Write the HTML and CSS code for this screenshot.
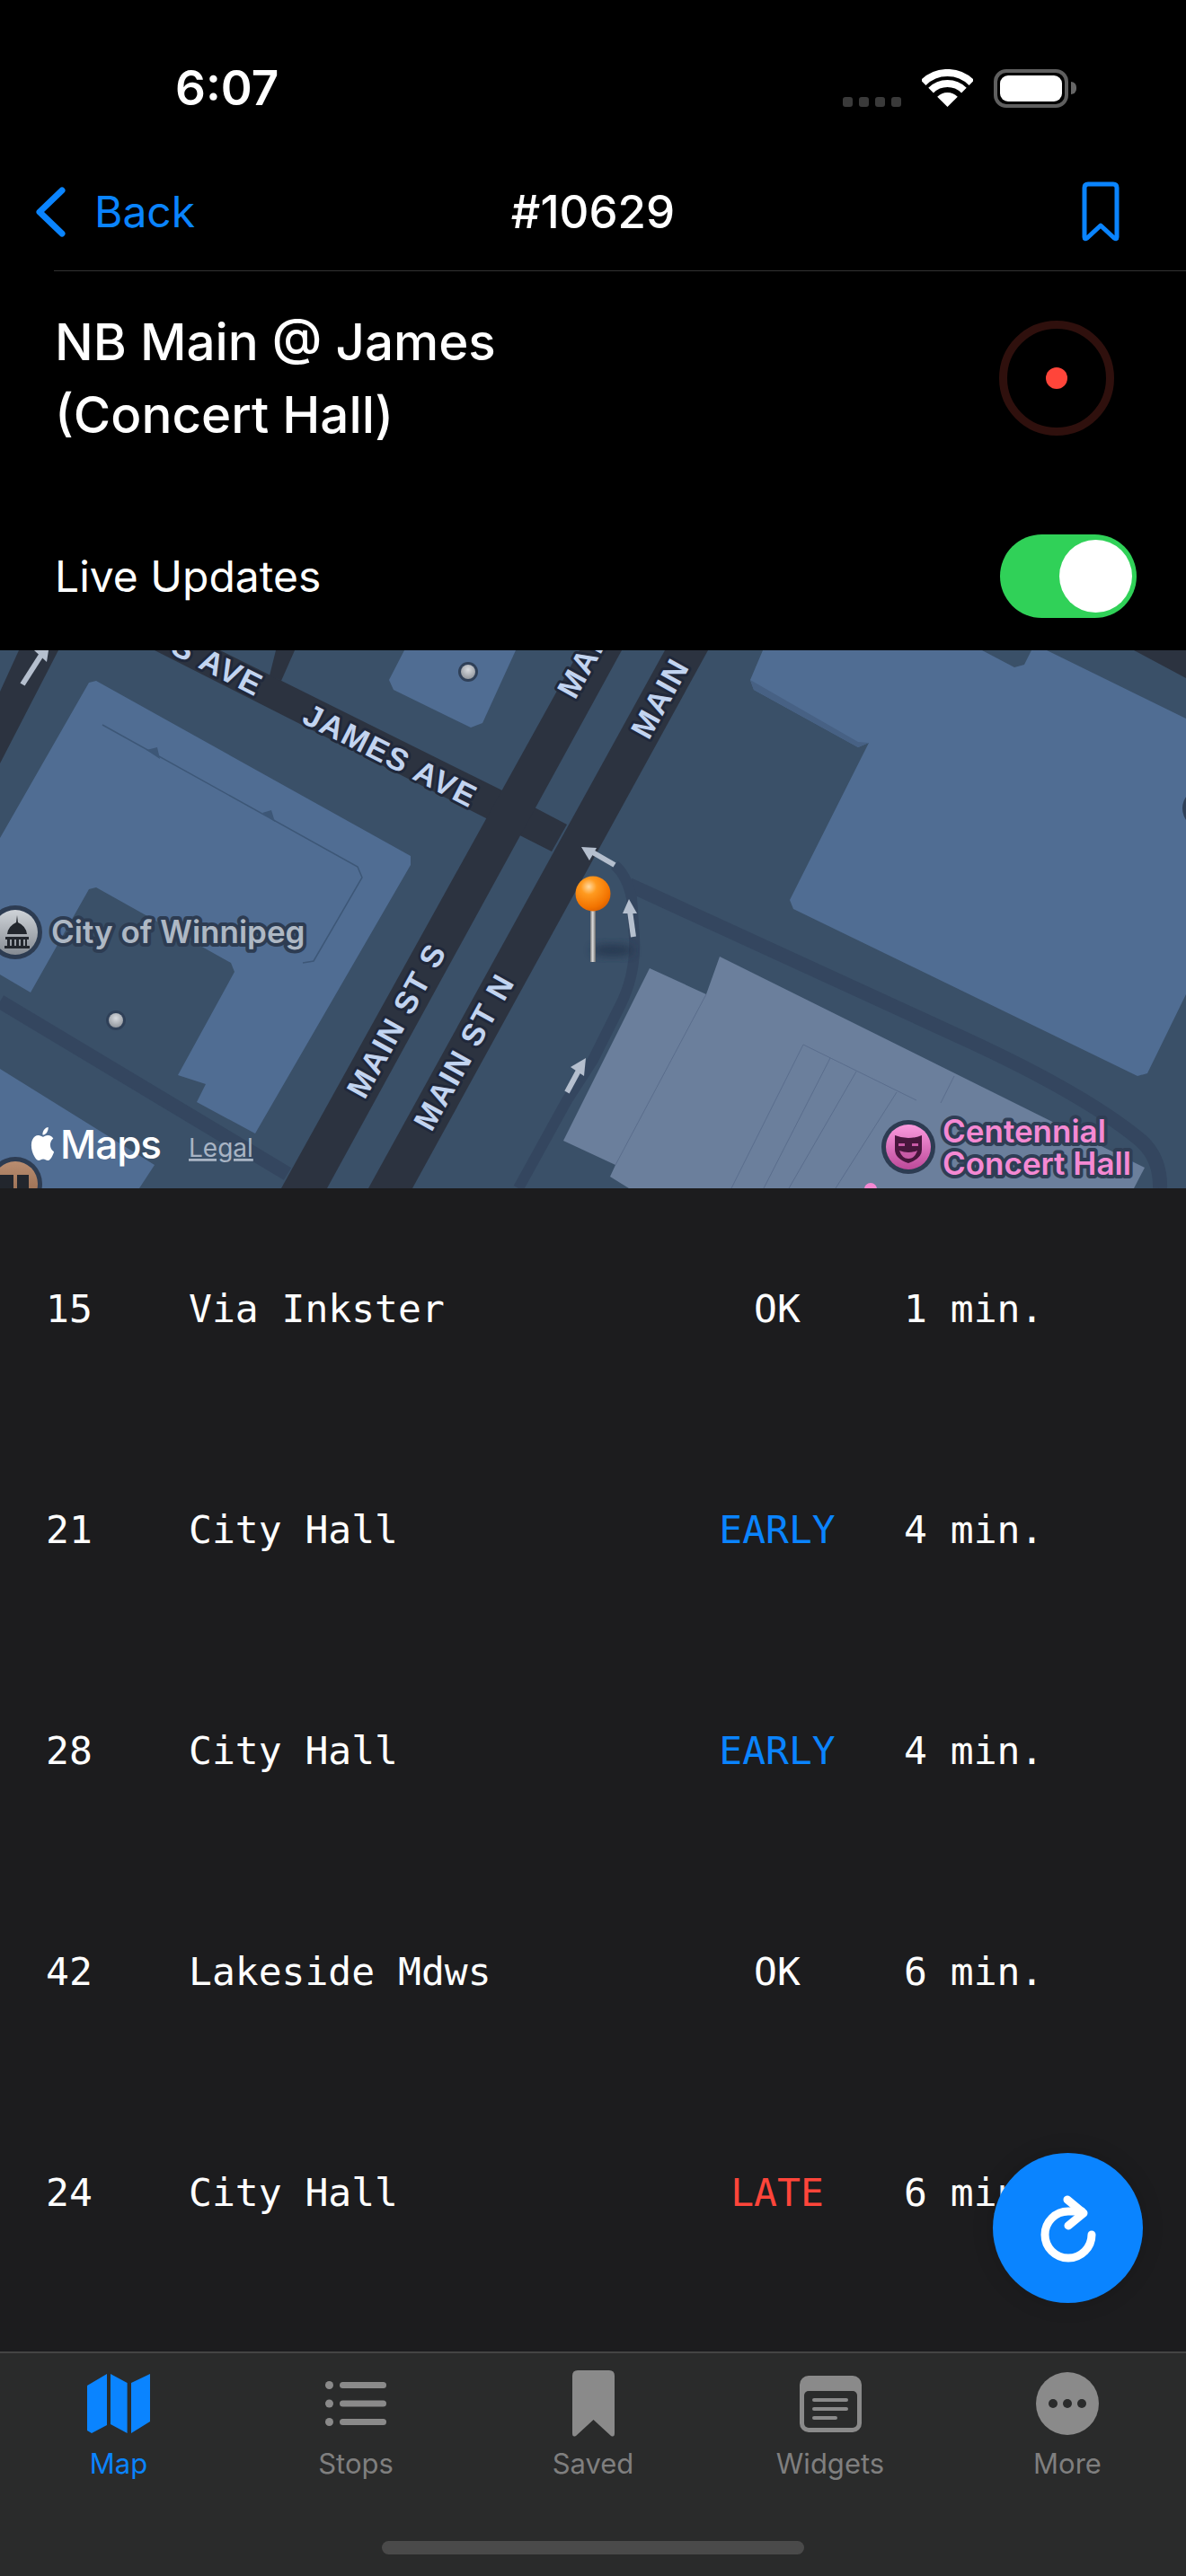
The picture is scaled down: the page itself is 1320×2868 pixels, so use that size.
FILE: index.html
```html
<!DOCTYPE html>
<html lang="en">
<head>
<meta charset="utf-8">
<title>#10629</title>
<link rel="stylesheet" href="styles.css">
</head>
<body>
<div class="screen">
  <header class="status">
    <span class="clock">6:07</span>
    <div class="status-icons">
      <div class="signal"><i></i><i></i><i></i><i></i></div>
      <svg class="wifi" viewBox="0 0 57 42"><path class="wifi-arc" d="M1.6 15.1A38 38 0 0 1 55.4 15.1"/><path class="wifi-arc" d="M10.1 23.6A26 26 0 0 1 46.9 23.6"/><path class="wifi-dot" d="M28.5 42L17.2 30.7A16 16 0 0 1 39.8 30.7Z"/></svg>
      <div class="battery"><div class="battery-body"><div class="battery-fill"></div></div><div class="battery-cap"></div></div>
    </div>
  </header>

  <nav class="nav">
    <div class="nav-back">
      <svg class="chevron" viewBox="0 0 33 56"><path d="M29 4L4 28L29 52"/></svg>
      <span class="back-label">Back</span>
    </div>
    <div class="nav-title">#10629</div>
    <div class="nav-action">
      <svg class="bookmark" viewBox="0 0 42 67"><path d="M3 7Q3 3 7 3H35Q39 3 39 7V62Q39 65 36 63L21 49L6 63Q3 65 3 62Z"/></svg>
    </div>
  </nav>
  <div class="separator"></div>

  <section class="stop-head">
    <h1 class="stop-name">NB Main @ James<br>(Concert Hall)</h1>
    <svg class="ring" viewBox="0 0 128 128"><circle class="ring-track" cx="64" cy="64" r="59.5"/><circle class="ring-dot" cx="64" cy="64" r="12"/></svg>
  </section>

  <section class="live">
    <span class="live-label">Live Updates</span>
    <div class="toggle"><div class="knob"></div></div>
  </section>

  <svg class="map" viewBox="0 724 1320 599">
    <defs>
      <radialGradient id="ball" cx="38%" cy="30%" r="75%"><stop offset="0" stop-color="#ffd9a0"/><stop offset=".3" stop-color="#ff9a1f"/><stop offset=".8" stop-color="#f27300"/><stop offset="1" stop-color="#d85f00"/></radialGradient>
      <linearGradient id="stick" x1="0" x2="1" y1="0" y2="0"><stop offset="0" stop-color="#777777"/><stop offset=".45" stop-color="#dddddd"/><stop offset="1" stop-color="#666666"/></linearGradient>
      <linearGradient id="grayPoi" x1="0" x2="0" y1="0" y2="1"><stop offset="0" stop-color="#cfd3d8"/><stop offset="1" stop-color="#858b93"/></linearGradient>
      <linearGradient id="pinkPoi" x1="0" x2="0" y1="0" y2="1"><stop offset="0" stop-color="#fb9ade"/><stop offset="1" stop-color="#bd4a9a"/></linearGradient>
      <linearGradient id="brownPoi" x1="0" x2="0" y1="0" y2="1"><stop offset="0" stop-color="#b98d70"/><stop offset="1" stop-color="#8f6448"/></linearGradient>
      <radialGradient id="dot" cx="50%" cy="35%" r="70%"><stop offset="0" stop-color="#d8dbdf"/><stop offset="1" stop-color="#8d9299"/></radialGradient>
      <filter id="blur" x="-50%" y="-50%" width="200%" height="200%"><feGaussianBlur stdDeviation="5"/></filter>
    </defs>
    <rect class="m-ground" x="0" y="724" width="1320" height="599"/>

    <polygon class="m-bldg" points="99,760 107,758 457,953 457,963 284,1262 219,1227 229,1207 198,1197 261,1082 257,1072 107,988 99,990 34,1105 0,1085 0,933"/>
    <polygon class="m-bldg" points="0,1190 172,1297 155,1323 0,1323"/>
    <polygon class="m-bldg" points="433,757 450,724 574,724 537,805 524,810 438,768"/>
    <polygon class="m-bldg" points="849,724 1093,724 1129,743 1140,740 1148,724 1165,724 1320,800 1320,1107 1277,1195 1266,1198 883,1012 879,1002 967,827 955,832 839,768 835,757"/>
    <polygon class="m-edge" points="835,757 955,826 967,827 955,832 839,768"/>
    <polyline class="m-crease" points="114,807 398,965 403,977 349,1070 337,1072"/>
    <polygon class="m-crease-fill" points="163,835 175,832 178,845"/>
    <polygon class="m-crease-fill" points="292,905 302,902 306,915"/>
    <circle class="m-blob" cx="1338" cy="900" r="22"/>

    <polygon class="m-light" points="723,1078 786,1107 801,1065 1274,1300 1262,1323 700,1323 679,1310 685,1297 627,1270"/>
    <g class="m-thin">
      <line x1="786" y1="1107" x2="685" y2="1297"/>
      <line x1="894" y1="1163" x2="814" y2="1323"/>
      <line x1="924" y1="1178" x2="850" y2="1323"/>
      <line x1="953" y1="1193" x2="878" y2="1323"/>
      <line x1="998" y1="1216" x2="930" y2="1323"/>
      <line x1="894" y1="1163" x2="1020" y2="1225"/>
      <line x1="1062" y1="1198" x2="1047" y2="1228"/>
    </g>

    <path class="m-lane" d="M700 985L1081 1160Q1210 1220 1270 1270Q1292 1290 1291 1323"/>
    <path class="m-lane-narrow" d="M684 963Q698 975 703 1000L706 1043Q708 1085 690 1120L660 1180L631 1225L577 1323"/>
    <polyline class="m-lane" points="0,1115 320,1307"/>

    <polygon class="m-road" points="245,724 555,878 631,918 614,948 539,910 172,724"/>
    <polygon class="m-road" points="307,724 328,724 313,758 300,752"/>
    <polygon class="m-road" points="21,724 65,724 0,850 0,770"/>
    <polygon class="m-road" points="1262,724 1320,724 1320,755"/>
    <polygon class="m-road" points="313,1323 364,1323 692,724 645,724"/>
    <polygon class="m-road" points="410,1323 459,1323 788,724 740,724"/>

    <g class="m-arrow">
      <line x1="25" y1="762" x2="48" y2="726"/>
      <polygon points="38,724 54,724 52,737"/>
      <line x1="705" y1="1043" x2="701" y2="1014"/>
      <polygon points="700,1001 693,1017 709,1017"/>
      <line x1="684" y1="963" x2="658" y2="948"/>
      <polygon points="647,943 664,944 656,958"/>
      <line x1="631" y1="1216" x2="645" y2="1190"/>
      <polygon points="652,1178 635,1188 650,1198"/>
    </g>

    <text class="m-street" transform="translate(429 852) rotate(27)" text-anchor="middle">JAMES AVE</text>
    <text class="m-street" transform="translate(285 776) rotate(27)" text-anchor="end">S AVE</text>
    <text class="m-street" transform="translate(722 825) rotate(-61)">MAIN</text>
    <text class="m-street" transform="translate(640 780) rotate(-61)">MAIN</text>
    <text class="m-street" transform="translate(452 1142) rotate(-61)" text-anchor="middle">MAIN ST S</text>
    <text class="m-street" transform="translate(527 1177) rotate(-61)" text-anchor="middle">MAIN ST N</text>

    <circle class="m-dot-ring" cx="521" cy="748" r="11"/><circle cx="521" cy="748" r="8" fill="url(#dot)"/>
    <circle class="m-dot-ring" cx="129" cy="1136" r="11"/><circle cx="129" cy="1136" r="8" fill="url(#dot)"/>

    <circle class="m-poi-ring" cx="17" cy="1038" r="30"/><circle cx="17" cy="1038" r="25" fill="url(#grayPoi)"/>
    <path class="m-poi-icon" d="M19 1019L20 1027Q29 1031 30 1040H8Q9 1031 18 1027Z"/>
    <path class="m-poi-icon" d="M6 1043H32V1046H30V1053H33V1056H5V1053H8V1046H6ZM11 1046V1053H13V1046ZM16 1046V1053H18V1046ZM21 1046V1053H23V1046ZM26 1046V1053H28V1046Z" fill-rule="evenodd"/>
    <text class="m-place" x="57" y="1050">City of Winnipeg</text>

    <circle class="m-poi-ring" cx="17" cy="1318" r="30"/><circle cx="17" cy="1318" r="25" fill="url(#brownPoi)"/>
    <path class="m-poi-icon" d="M0 1308H15V1330H0ZM19 1308H32V1330H19Z"/>

    <circle class="m-poi-ring" cx="1011" cy="1277" r="30"/><circle cx="1011" cy="1277" r="25" fill="url(#pinkPoi)"/>
    <path class="m-mask" d="M996 1264Q1011 1270 1026 1264V1280Q1026 1290 1011 1295Q996 1290 996 1280Z"/>
    <path class="m-mask-face" d="M1000 1273H1007V1276H1000ZM1015 1273H1022V1276H1015ZM1001 1281Q1011 1285 1021 1281Q1018 1290 1011 1290Q1004 1290 1001 1281Z"/>
    <text class="m-poi-name" x="1049" y="1272">Centennial</text>
    <text class="m-poi-name" x="1049" y="1308">Concert Hall</text>
    <circle class="m-pink-dot" cx="969" cy="1324" r="7"/>

    <svg x="32" y="1255" width="31" height="37" viewBox="0 0 24 24" preserveAspectRatio="none"><path class="m-apple" d="M12.152 6.896c-.948 0-2.415-1.078-3.96-1.04-2.04.027-3.91 1.183-4.961 3.014-2.117 3.675-.546 9.103 1.519 12.09 1.013 1.454 2.208 3.09 3.792 3.039 1.52-.065 2.09-.987 3.935-.987 1.831 0 2.35.987 3.96.948 1.637-.026 2.676-1.48 3.676-2.948 1.156-1.688 1.636-3.325 1.662-3.415-.039-.013-3.182-1.221-3.22-4.857-.026-3.04 2.48-4.494 2.597-4.559-1.429-2.09-3.623-2.324-4.39-2.376-2-.156-3.675 1.09-4.61 1.09zM15.53 3.83c.843-1.012 1.4-2.427 1.245-3.83-1.207.052-2.662.805-3.532 1.818-.78.896-1.454 2.338-1.273 3.714 1.338.104 2.715-.688 3.559-1.701"/></svg>
    <text class="m-logo" x="67" y="1290">Maps</text>
    <text class="m-legal" x="210" y="1288">Legal</text>

    <ellipse class="m-shadow" cx="682" cy="1058" rx="24" ry="7" filter="url(#blur)"/>
    <rect x="657" y="1012" width="6" height="59" fill="url(#stick)"/>
    <circle cx="660" cy="995" r="19.5" fill="url(#ball)"/>
  </svg>

  <main class="list">
    <div class="row"><span>15</span><span>Via Inkster</span><span class="state">OK</span><span class="eta">1 min.</span></div>
    <div class="row"><span>21</span><span>City Hall</span><span class="state early">EARLY</span><span class="eta">4 min.</span></div>
    <div class="row"><span>28</span><span>City Hall</span><span class="state early">EARLY</span><span class="eta">4 min.</span></div>
    <div class="row"><span>42</span><span>Lakeside Mdws</span><span class="state">OK</span><span class="eta">6 min.</span></div>
    <div class="row"><span>24</span><span>City Hall</span><span class="state late">LATE</span><span class="eta">6 min.</span></div>
  </main>

  <button class="fab" type="button" aria-label="Refresh">
    <svg viewBox="0 0 70 76"><path class="fab-arc" d="M61 45A26 26 0 1 1 35 19H50"/><path class="fab-arc" d="M34 6L52 21L35 35"/></svg>
  </button>

  <footer class="tabbar">
    <div class="tabs">
      <div class="tab active">
        <div class="tab-icon"><svg class="i-map" viewBox="0 0 70 66"><path d="M0 13L22 0V57L5 66L0 63ZM26 0L44.6 10V66L26 56ZM49 10L70 0V53L49 66Z"/></svg></div>
        <span class="tab-label">Map</span>
      </div>
      <div class="tab">
        <div class="tab-icon"><svg class="i-stops" viewBox="0 0 68 50"><circle cx="4.5" cy="4.5" r="4.5"/><circle cx="4.5" cy="25" r="4.5"/><circle cx="4.5" cy="45.5" r="4.5"/><rect x="16" y="1" width="52" height="7" rx="3.5"/><rect x="16" y="21.5" width="52" height="7" rx="3.5"/><rect x="16" y="42" width="52" height="7" rx="3.5"/></svg></div>
        <span class="tab-label">Stops</span>
      </div>
      <div class="tab">
        <div class="tab-icon"><svg class="i-saved" viewBox="0 0 47 74"><path d="M0 6Q0 0 6 0H41Q47 0 47 6V70Q47 75 43 73L23.5 55L4 73Q0 75 0 70Z"/></svg></div>
        <span class="tab-label">Saved</span>
      </div>
      <div class="tab">
        <div class="tab-icon"><svg class="i-widgets" viewBox="0 0 69 63"><rect class="w-bg" width="69" height="63" rx="10"/><rect class="w-in" x="5" y="17" width="59" height="41" rx="5"/><rect class="w-bg" x="14" y="25" width="40" height="4" rx="2"/><rect class="w-bg" x="14" y="35" width="40" height="4" rx="2"/><rect class="w-bg" x="14" y="45" width="28" height="4" rx="2"/></svg></div>
        <span class="tab-label">Widgets</span>
      </div>
      <div class="tab">
        <div class="tab-icon"><svg class="i-more" viewBox="0 0 70 70"><circle class="w-bg" cx="35" cy="35" r="35"/><circle class="w-in" cx="19" cy="35" r="5"/><circle class="w-in" cx="35" cy="35" r="5"/><circle class="w-in" cx="51" cy="35" r="5"/></svg></div>
        <span class="tab-label">More</span>
      </div>
    </div>
    <div class="home-bar"></div>
  </footer>
</div>
</body>
</html>
```
FILE: styles.css
```css
* { box-sizing: border-box; }
html, body { margin: 0; padding: 0; background: #000; }
body { font-family: Inter, "Liberation Sans", sans-serif; color: #fff; }
.screen { position: relative; width: 1320px; height: 2868px; overflow: hidden; background: #000; display: flex; flex-direction: column; }

.status { height: 150px; padding: 46px 122px 0 195px; display: flex; align-items: center; justify-content: space-between; flex: none; }
.clock { font-size: 53px; font-weight: 600; line-height: 60px; }
.status-icons { display: flex; align-items: center; gap: 23px; }
.signal { display: flex; gap: 7px; align-self: flex-end; margin-bottom: 1px; }
.signal i { display: block; width: 11px; height: 11px; border-radius: 3px; background: #3a3a3a; }
.wifi { width: 57px; height: 42px; display: block; }
.wifi-arc { fill: none; stroke: #fff; stroke-width: 8; }
.wifi-dot { fill: #fff; }
.battery { display: flex; align-items: center; gap: 3px; }
.battery-body { width: 83px; height: 43px; border: 4px solid #5f5f5f; border-radius: 14px; padding: 3px; }
.battery-fill { width: 100%; height: 100%; background: #fff; border-radius: 9px; }
.battery-cap { width: 6px; height: 14px; background: #666; border-radius: 0 6px 6px 0; }

.nav { height: 151px; padding-top: 20px; display: grid; grid-template-columns: 1fr auto 1fr; align-items: center; flex: none; }
.nav-back { display: flex; align-items: center; gap: 32px; padding-left: 40px; }
.chevron { width: 33px; height: 56px; display: block; }
.chevron path { fill: none; stroke: #0a84ff; stroke-width: 7; stroke-linecap: round; stroke-linejoin: round; }
.back-label { font-size: 48px; line-height: 60px; color: #0a84ff; }
.nav-title { font-size: 51px; font-weight: 550; line-height: 60px; }
.nav-action { display: flex; justify-content: flex-end; padding-right: 74px; }
.bookmark { width: 42px; height: 67px; display: block; }
.bookmark path { fill: none; stroke: #0a84ff; stroke-width: 5; stroke-linejoin: round; }
.separator { height: 1px; margin-left: 60px; background: #333; flex: none; }

.stop-head { display: flex; align-items: center; justify-content: space-between; padding: 38px 80px 0 61px; flex: none; }
.stop-name { margin: 0; font-size: 56.5px; font-weight: 550; line-height: 81px; }
.ring { width: 128px; height: 128px; display: block; }
.ring-track { fill: none; stroke: #2f100d; stroke-width: 9; }
.ring-dot { fill: #ff453a; }

.live { display: flex; align-items: center; justify-content: space-between; padding: 93px 55px 36px 61px; flex: none; }
.live-label { font-size: 48px; line-height: 60px; }
.toggle { width: 152px; height: 93px; background: #30d158; border-radius: 47px; padding: 6px 5px; display: flex; justify-content: flex-end; }
.knob { width: 81px; height: 81px; background: #fff; border-radius: 50%; }

.map { display: block; width: 1320px; height: 599px; flex: none; }
.m-ground { fill: #3a5068; }
.m-bldg { fill: #506d93; }
.m-edge { fill: #476184; }
.m-crease { fill: none; stroke: #3d5777; stroke-width: 1.5; }
.m-crease-fill { fill: #3d5777; }
.m-blob { fill: #2f4058; }
.m-light { fill: #6b7f9c; }
.m-thin line { stroke: #5a6d8c; stroke-width: 1; }
.m-lane { fill: none; stroke: #34465f; stroke-width: 16; }
.m-lane-narrow { fill: none; stroke: #34465f; stroke-width: 12; }
.m-road { fill: #2c3340; }
.m-arrow line { stroke: #b5bfce; stroke-width: 6; }
.m-arrow polygon { fill: #b5bfce; }
.m-street { font-family: "Liberation Sans", Arial, sans-serif; font-size: 35px; font-weight: 700; letter-spacing: 1.5px; fill: #c2d4f0; stroke: #20283a; stroke-width: 6; stroke-linejoin: round; paint-order: stroke; }
.m-place { font-family: Inter, sans-serif; font-size: 35px; font-weight: 600; fill: #aeb8c4; stroke: #2d3c52; stroke-width: 8; stroke-linejoin: round; paint-order: stroke; }
.m-poi-name { font-family: Inter, sans-serif; font-size: 35px; font-weight: 600; fill: #f589d3; stroke: #2f3e55; stroke-width: 8; stroke-linejoin: round; paint-order: stroke; }
.m-poi-ring { fill: #2d3c52; }
.m-poi-icon { fill: #22262d; }
.m-mask { fill: #47163c; }
.m-mask-face { fill: #c85aa6; }
.m-pink-dot { fill: #f589d3; }
.m-dot-ring { fill: #2f4058; }
.m-apple { fill: #fff; }
.m-logo { font-family: Inter, sans-serif; font-size: 44px; font-weight: 500; letter-spacing: -1px; fill: #fff; }
.m-legal { font-family: Inter, sans-serif; font-size: 28px; fill: #a8b4c4; text-decoration: underline; }
.m-shadow { fill: #24314a; opacity: .7; }

.list { flex: none; height: 1295px; padding-top: 11px; background: #1c1c1e; font-family: "DejaVu Sans Mono", monospace; font-size: 43px; }
.row { display: grid; grid-template-columns: 158px 530px 250px 1fr; align-items: center; height: 246px; padding-left: 51px; line-height: 52px; white-space: nowrap; }
.row span:nth-child(2) { padding-left: 1px; }
.state { text-align: center; padding-left: 2px; }
.early { color: #0a84ff; }
.late { color: #ff453a; }
.eta { padding-left: 17px; }

.fab { position: absolute; left: 1105px; top: 2397px; width: 167px; height: 167px; padding: 0; border: 0; border-radius: 50%; background: #0a84ff; display: flex; align-items: center; justify-content: center; box-shadow: 0 0 24px rgba(0,0,0,.15); }
.fab svg { width: 70px; height: 76px; display: block; }
.fab-arc { fill: none; stroke: #fff; stroke-width: 9; stroke-linecap: round; stroke-linejoin: round; }

.tabbar { flex: none; height: 250px; background: #2a2b2b; border-top: 2px solid #444; }
.tabs { display: grid; grid-template-columns: repeat(5, 1fr); padding-top: 18px; }
.tab { display: flex; flex-direction: column; align-items: center; }
.tab-icon { height: 76px; display: flex; align-items: center; justify-content: center; }
.tab-icon svg { display: block; }
.tab-label { margin-top: 11px; font-size: 31px; line-height: 36px; color: #7f7f7f; }
.tab.active .tab-label { color: #0a84ff; }
.i-map { width: 70px; height: 66px; fill: #0a84ff; }
.i-stops { width: 68px; height: 50px; fill: #8a8a8a; }
.i-saved { width: 47px; height: 74px; fill: #8a8a8a; }
.i-widgets { width: 69px; height: 63px; }
.i-more { width: 70px; height: 70px; }
.w-bg { fill: #8a8a8a; }
.w-in { fill: #2a2b2b; }
.home-bar { width: 470px; height: 15px; margin: 68px auto 0; border-radius: 8px; background: #4a4a4a; }
```
